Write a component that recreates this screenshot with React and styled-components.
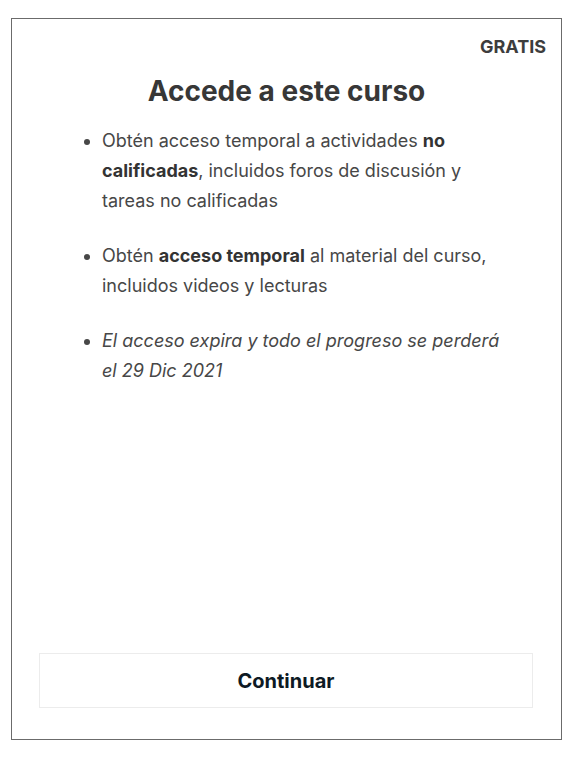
import React from 'react';
import styled, { createGlobalStyle } from 'styled-components';

const GlobalStyle = createGlobalStyle`
  html, body {
    margin: 0;
    padding: 0;
    background: #ffffff;
  }
  body {
    font-family: Inter, "Noto Sans", sans-serif;
  }
`;

const Card = styled.div`
  box-sizing: border-box;
  margin: 18px 0 0 11px;
  width: 551px;
  height: 722px;
  border: 1px solid #6b6b6b;
  display: flex;
  flex-direction: column;
  padding: 0 15px 31px 27px;
`;

const Price = styled.div`
  align-self: flex-end;
  margin-top: 17px;
  font-size: 18px;
  line-height: 22px;
  font-weight: 700;
  color: #3d3d3d;
`;

const Title = styled.h2`
  margin: 15px 0 17px;
  text-align: center;
  font-size: 28px;
  line-height: 36px;
  font-weight: 700;
  color: #373737;
  padding-right: 12px;
`;

const Benefits = styled.ul`
  margin: 0;
  padding: 0 0 0 63px;
  list-style: disc;
`;

const Benefit = styled.li`
  font-size: 18px;
  line-height: 30px;
  color: #474747;
  max-width: 400px;
  margin-bottom: 25px;
  font-style: ${(p) => (p.$note ? 'italic' : 'normal')};

  strong {
    font-weight: 700;
    color: #333333;
  }
`;

const ContinueButton = styled.button`
  margin-top: auto;
  box-sizing: border-box;
  width: 494px;
  height: 55px;
  background: #ffffff;
  border: 1px solid #ececec;
  font-family: Inter, "Noto Sans", sans-serif;
  font-size: 20px;
  font-weight: 700;
  color: #0d1a24;
  cursor: pointer;
`;

function App() {
  return (
    <>
      <GlobalStyle />
      <Card>
        <Price>GRATIS</Price>
        <Title>Accede a este curso</Title>
        <Benefits>
          <Benefit>
            Obtén acceso temporal a actividades <strong>no calificadas</strong>, incluidos foros de discusión y tareas no calificadas
          </Benefit>
          <Benefit>
            Obtén <strong>acceso temporal</strong> al material del curso, incluidos videos y lecturas
          </Benefit>
          <Benefit $note>
            El acceso expira y todo el progreso se perderá el 29 Dic 2021
          </Benefit>
        </Benefits>
        <ContinueButton>Continuar</ContinueButton>
      </Card>
    </>
  );
}

export default App;
